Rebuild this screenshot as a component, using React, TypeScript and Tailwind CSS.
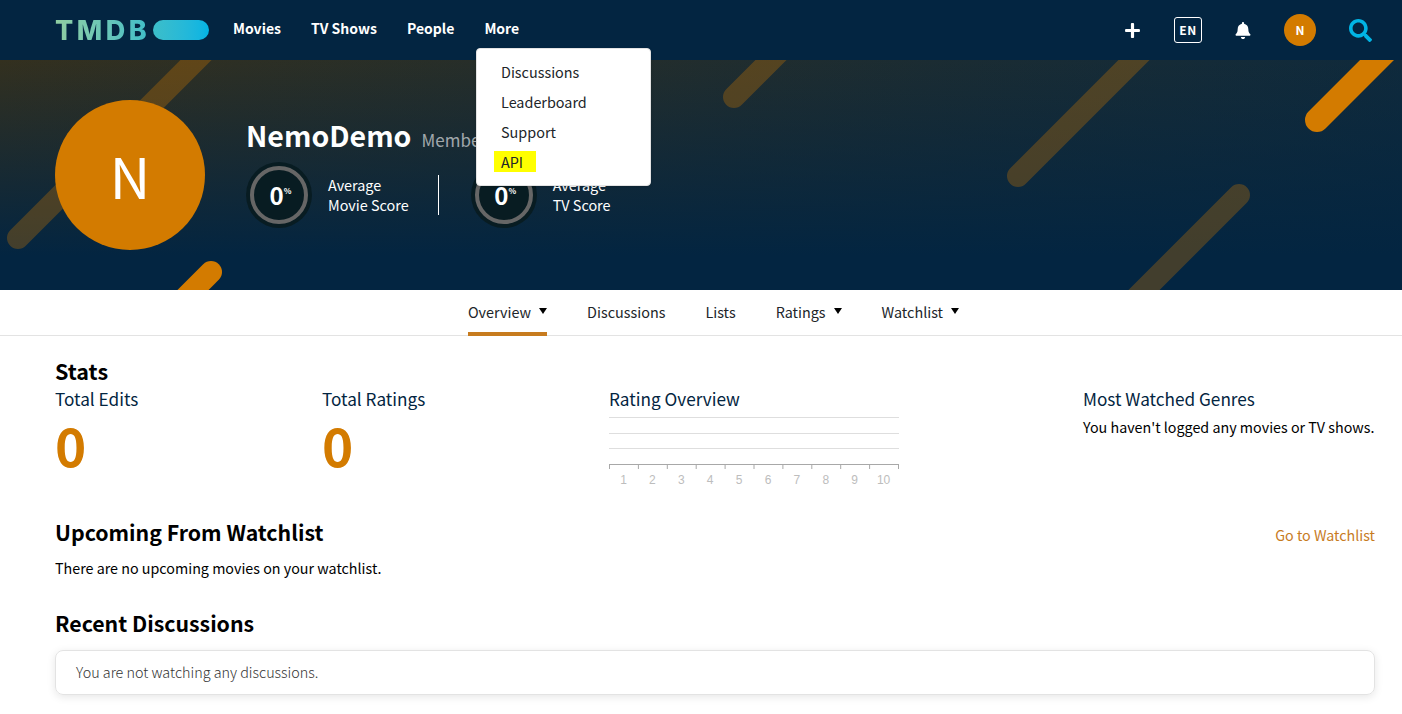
import React from 'react';
import { FaBell, FaPlus, FaSearch } from 'react-icons/fa';

const sans = "font-['Source_Sans_Pro','Noto_Sans_CJK_SC','Noto_Sans_CJK_JP',sans-serif]";

const navLinks = ['Movies', 'TV Shows', 'People', 'More'];
const moreLinks = ['Discussions', 'Leaderboard', 'Support'];
const tabs = [
  { label: 'Overview', caret: true, active: true },
  { label: 'Discussions' },
  { label: 'Lists' },
  { label: 'Ratings', caret: true },
  { label: 'Watchlist', caret: true },
];

const ScoreRing = () => (
  <div className="w-[66px] h-[66px] rounded-full bg-[#081c22] p-[4px] shrink-0">
    <div className="w-full h-full rounded-full border-[4px] border-[#666666] flex items-center justify-center pl-[3px] text-white">
      <span className="text-[24px] font-bold leading-none">0</span>
      <span className="text-[8px] font-bold leading-none mb-[8px]">%</span>
    </div>
  </div>
);

const Score = ({ second }: { second: string }) => (
  <div className="flex items-center gap-[16px]">
    <ScoreRing />
    <div className="text-[14.4px] leading-[20px] text-white whitespace-nowrap">
      <div>Average</div>
      <div>{second}</div>
    </div>
  </div>
);

const Stat = ({ label, className }: { label: string; className: string }) => (
  <div className={`${className} pt-[3px]`}>
    <div className="text-[17.2px] leading-[24px] text-[#032541]">{label}</div>
    <div className="text-[53px] leading-[70px] font-bold text-[#d37b00] mt-[-2px]">0</div>
  </div>
);

const RatingChart = () => (
  <svg width="290" height="75" viewBox="0 0 290 75" className="block mt-[6px]">
    {[0.5, 16.5, 31.5].map(y => (
      <line key={y} x1="0" x2="290" y1={y} y2={y} stroke="#dedede" />
    ))}
    <line x1="0" x2="290" y1="47.5" y2="47.5" stroke="#a8a8a8" />
    {Array.from({ length: 11 }).map((_, i) => (
      <line key={i} x1={0.5 + i * 28.9} x2={0.5 + i * 28.9} y1="47" y2="52" stroke="#a8a8a8" />
    ))}
    {Array.from({ length: 10 }).map((_, i) => (
      <text
        key={i}
        x={14.5 + i * 28.9}
        y="67"
        textAnchor="middle"
        fontSize="12"
        fontFamily="Liberation Sans"
        fill="#bdbdbd"
      >
        {i + 1}
      </text>
    ))}
  </svg>
);

export default function App() {
  return (
    <div className={`${sans} w-full h-[714px] overflow-hidden bg-white text-black relative`}>
      <header className="h-[60px] bg-[#032541] flex items-center pl-[55px] pr-[30px]">
        <div className="flex items-center gap-[3px] w-[178px] shrink-0">
          <span className="font-['Inter',sans-serif] text-[27px] leading-none font-extrabold tracking-[3.5px] bg-gradient-to-r from-[#90cea1] to-[#3cbec9] bg-clip-text text-transparent">
            TMDB
          </span>
          <span className="w-[56px] h-[20px] rounded-full bg-gradient-to-r from-[#3cbec9] to-[#01b4e4]" />
        </div>
        <nav className="flex items-center gap-[30px] pb-[3px] text-[14px] font-semibold text-white">
          {navLinks.map(link => (
            <a key={link}>{link}</a>
          ))}
        </nav>
        <div className="ml-auto flex items-center text-white">
          <FaPlus className="w-[17px] h-[17px]" />
          <div className="ml-[33px] w-[28px] h-[26px] rounded-[3px] border border-white flex items-center justify-center text-[12px] font-semibold tracking-[0.5px]">
            EN
          </div>
          <FaBell className="ml-[33px] w-[16px] h-[17px]" />
          <div className="ml-[33px] w-[32px] h-[32px] rounded-full bg-[#d37b00] flex items-center justify-center text-[12px] font-semibold">
            N
          </div>
          <FaSearch className="ml-[33px] w-[23px] h-[23px] text-[#01b4e4]" />
        </div>
      </header>

      <section className="relative h-[230px] overflow-hidden bg-[linear-gradient(180deg,rgba(3,37,65,0)_0%,#032541_85%),linear-gradient(90deg,#33301f_0%,#0f2a3c_100%)]">
        <svg className="absolute inset-0" width="1402" height="230" viewBox="0 0 1402 230" fill="none" strokeLinecap="round">
          <g stroke="#d37b00" strokeOpacity="0.3">
            <line x1="18" y1="178" x2="229" y2="-33" strokeWidth="22" />
            <line x1="734" y1="37" x2="799" y2="-28" strokeWidth="22" />
            <line x1="1018" y1="116" x2="1169" y2="-35" strokeWidth="22" />
            <line x1="1239" y1="135" x2="1121" y2="253" strokeWidth="22" />
          </g>
          <g stroke="#d37b00">
            <line x1="211" y1="212" x2="171" y2="252" strokeWidth="22" />
            <line x1="1317" y1="60" x2="1409" y2="-32" strokeWidth="24" />
          </g>
        </svg>
        <div className="relative flex items-start pl-[55px] pt-[40px]">
          <div className="w-[150px] h-[150px] rounded-full bg-[#d37b00] flex items-center justify-center text-white text-[56px] leading-none shrink-0">
            N
          </div>
          <div className="ml-[41px] pt-[16px]">
            <div className="flex items-baseline gap-[10px]">
              <span className="text-[28.5px] leading-[38px] font-bold text-white">NemoDemo</span>
              <span className="text-[17px] text-white/60">Member since May 2024</span>
            </div>
            <div className="flex items-center mt-[8px]">
              <Score second="Movie Score" />
              <div className="w-px h-[40px] bg-white ml-[29px] mr-[32px]" />
              <Score second="TV Score" />
            </div>
          </div>
        </div>
      </section>

      <div className="absolute left-[476px] top-[48px] w-[175px] h-[138px] bg-white rounded-[4px] border border-[#e3e3e3] shadow-sm text-[14.4px] leading-[30px] text-[#212529] pt-[8px] z-10">
        {moreLinks.map(link => (
          <div key={link} className="pl-[24px]">{link}</div>
        ))}
        <div className="pl-[17px]">
          <span className="inline-block w-[42px] h-[21px] leading-[21px] pl-[7px] bg-[#ffff00]">API</span>
        </div>
      </div>

      <nav className="h-[46px] border-b border-[#e3e3e3] flex justify-center gap-[40px] pl-[25px] text-[14.4px] text-[#212529]">
        {tabs.map(tab => (
          <div
            key={tab.label}
            className={`flex items-center h-[46px] gap-[8px] border-b-4 pt-[2px] ${tab.active ? 'border-[#c77b1e]' : 'border-transparent'}`}
          >
            {tab.label}
            {tab.caret && <span className="w-0 h-0 border-x-[4px] border-x-transparent border-t-[6px] border-t-black mb-[3px]" />}
          </div>
        ))}
      </nav>

      <main className="pl-[55px] pr-[27px] pt-[22px]">
        <h2 className="text-[21.5px] leading-[26px] font-bold">Stats</h2>
        <div className="flex">
          <Stat label="Total Edits" className="w-[267px] shrink-0" />
          <Stat label="Total Ratings" className="w-[287px] shrink-0" />
          <div className="w-[474px] shrink-0 pt-[3px]">
            <div className="text-[17.2px] leading-[24px] text-[#032541]">Rating Overview</div>
            <RatingChart />
          </div>
          <div className="flex-1 pt-[3px]">
            <div className="text-[17.2px] leading-[24px] text-[#032541]">Most Watched Genres</div>
            <div className="text-[14.3px] leading-[24px] mt-[4px] whitespace-nowrap">You haven't logged any movies or TV shows.</div>
          </div>
        </div>

        <div className="flex items-center justify-between mt-[25px]">
          <h2 className="text-[21.3px] leading-[30px] font-bold">Upcoming From Watchlist</h2>
          <a className="text-[14.3px] text-[#c77b1e] mt-[6px]">Go to Watchlist</a>
        </div>
        <p className="text-[14.3px] leading-[24px] mt-[9px]">There are no upcoming movies on your watchlist.</p>

        <h2 className="text-[21.3px] leading-[30px] font-bold mt-[28px]">Recent Discussions</h2>
        <div className="mt-[12px] h-[45px] rounded-lg border border-[#e3e3e3] shadow-[0_2px_8px_rgba(0,0,0,0.1)] flex items-center pl-[20px] pb-[1px] text-[14.35px] font-light text-[#333333]">
          You are not watching any discussions.
        </div>
      </main>
    </div>
  );
}
